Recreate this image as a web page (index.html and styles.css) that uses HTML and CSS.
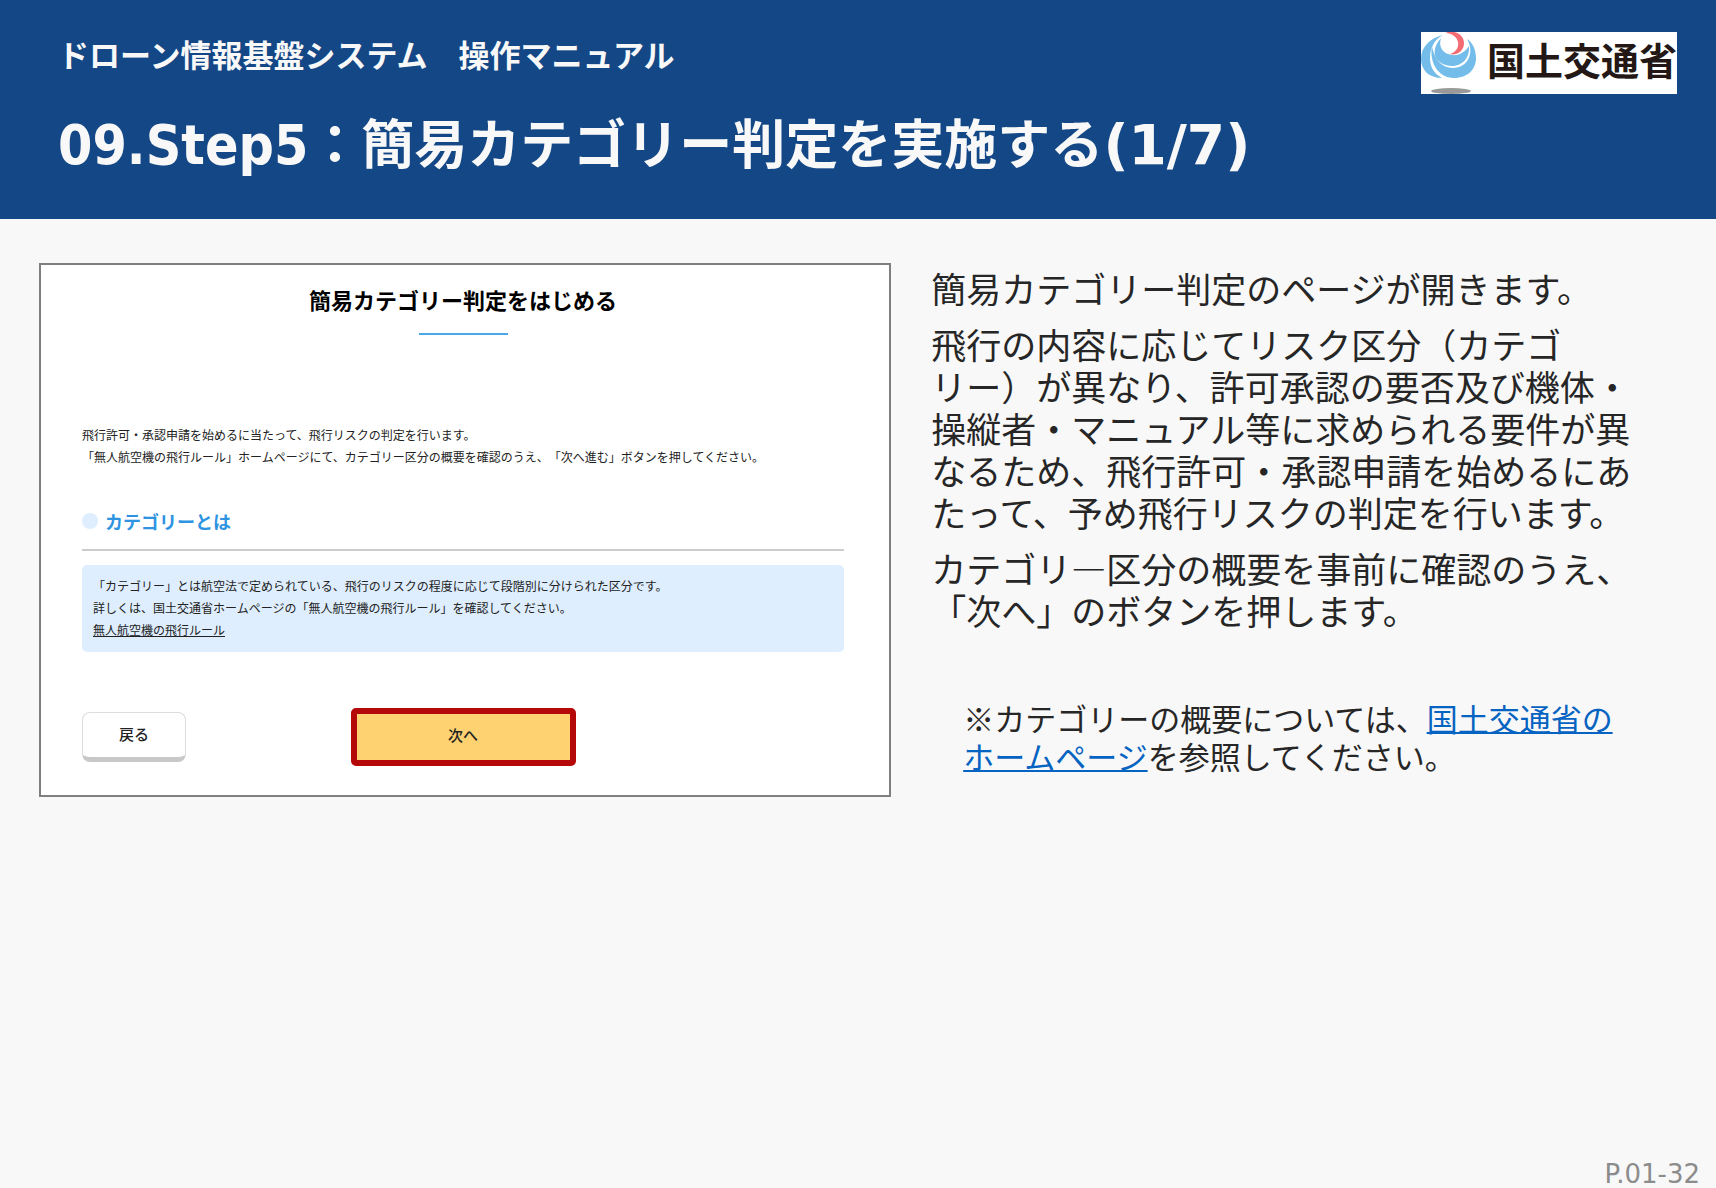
FILE: index.html
```html
<!DOCTYPE html>
<html lang="ja">
<head>
  <meta charset="UTF-8">
  <meta name="viewport" content="width=device-width, initial-scale=1.0">
  <title>ドローン情報基盤システム 操作マニュアル</title>
  <link rel="stylesheet" href="styles.css">
</head>
<body>
  <header class="header">
    <div class="header-text">
      <p class="manual-name">ドローン情報基盤システム　操作マニュアル</p>
      <h1><span class="step">09.Step5</span>：簡易カテゴリー判定を実施する<span class="count">(1/7)</span></h1>
    </div>
    <div class="logo">
      <svg viewBox="0 0 58 62" aria-hidden="true">
        <path d="M22 3C9 6 0 15 0 27c0 11 8 19 21 19C12 41 9 34 9 26 9 16 13 8 22 3z" fill="#74bdea"/>
        <path d="M11 14C8 30 17 46 33 46c14 0 22-9 22-20 0-9-4-16-9-19 8 13 1 29-14 29-11 0-19-9-21-22z" fill="#74bdea"/>
        <path d="M20 6c-6 7-8 14-5 20 3 5 10 8 16 8 11 0 18-9 17-20-4 6-10 10-17 9C22 22 17 15 20 6z" fill="#74bdea"/>
        <path d="M24 1c10-4 19 2 19 10 0 8-7 13-14 11 6-2 9-7 8-12C36 5 31 1 24 1z" fill="#f36c74"/>
        <ellipse cx="30" cy="59" rx="20" ry="3" fill="#999"/>
      </svg>
      <span>国土交通省</span>
    </div>
  </header>

  <main class="content">
    <section class="screen">
      <h2>簡易カテゴリー判定をはじめる</h2>
      <p class="lead">飛行許可・承認申請を始めるに当たって、飛行リスクの判定を行います。<br>
      「無人航空機の飛行ルール」ホームページにて、カテゴリー区分の概要を確認のうえ、「次へ進む」ボタンを押してください。</p>
      <h3>カテゴリーとは</h3>
      <div class="info-box">
        「カテゴリー」とは航空法で定められている、飛行のリスクの程度に応じて段階別に分けられた区分です。<br>
        詳しくは、国土交通省ホームページの「無人航空機の飛行ルール」を確認してください。<br>
        <a href="#">無人航空機の飛行ルール</a>
      </div>
      <div class="button-row">
        <button type="button" class="back-btn">戻る</button>
        <button type="button" class="next-btn">次へ</button>
      </div>
    </section>

    <section class="description">
      <p>簡易カテゴリー判定のページが開きます。</p>
      <p>飛行の内容に応じてリスク区分（カテゴリー）が異なり、許可承認の要否及び機体・操縦者・マニュアル等に求められる要件が異なるため、飛行許可・承認申請を始めるにあたって、予め飛行リスクの判定を行います。</p>
      <p>カテゴリ―区分の概要を事前に確認のうえ、「次へ」のボタンを押します。</p>
      <p class="note">※カテゴリーの概要については、<a href="#">国土交通省のホームページ</a>を参照してください。</p>
    </section>
  </main>

  <footer class="footer">P.01-32</footer>
</body>
</html>
```
FILE: styles.css
```css
* {
  box-sizing: border-box;
}

body {
  margin: 0;
  min-height: 100vh;
  display: flex;
  flex-direction: column;
  font-family: "Noto Sans CJK JP", sans-serif;
  background-color: #f8f8f8;
  color: #262626;
  line-break: strict;
  text-spacing-trim: space-all;
}

h1, h2, h3, p {
  margin: 0;
}

.header {
  background-color: #144786;
  color: #f8f8f8;
  display: flex;
  align-items: flex-start;
  justify-content: space-between;
  padding: 32px 39px 44px 58px;
}

.manual-name {
  font-size: 31px;
  font-weight: bold;
  line-height: 44px;
}

.header h1 {
  margin-top: 32px;
  font-size: 53px;
  font-weight: bold;
  line-height: 67px;
}

.step,
.count {
  font-family: "DejaVu Sans Condensed", "DejaVu Sans", sans-serif;
  font-size: 55px;
  line-height: 40px;
}

.count {
  font-family: "DejaVu Sans", sans-serif;
}

.logo {
  display: flex;
  align-items: flex-start;
  gap: 8px;
  background-color: white;
  color: #231815;
}

.logo svg {
  width: 58px;
  height: 62px;
}

.logo span {
  font-size: 38px;
  font-weight: bold;
  line-height: 54px;
}

.content {
  flex: 1;
  display: grid;
  grid-template-columns: 17fr 14fr;
  gap: 40px;
  align-items: start;
  padding: 44px 83px 0 39px;
}

.screen {
  background-color: white;
  border: 2px solid #7f7f7f;
  padding: 18px 45px 29px 41px;
  color: #222;
  font-size: 12px;
  line-height: 22px;
}

.screen h2 {
  color: #000;
  font-size: 22px;
  font-weight: bold;
  line-height: 32px;
  text-align: center;
}

.screen h2::after {
  content: "";
  display: block;
  width: 89px;
  height: 2px;
  margin: 18px auto 0;
  background-color: #4ba8e8;
}

.lead {
  margin-top: 89px;
}

.screen h3 {
  display: flex;
  align-items: center;
  gap: 7px;
  margin-top: 38px;
  padding-bottom: 13px;
  border-bottom: 2px solid #ccc;
  color: #2e94e2;
  font-size: 18px;
  font-weight: bold;
  line-height: 30px;
}

.screen h3::before {
  content: "";
  width: 16px;
  height: 16px;
  border-radius: 50%;
  background-color: #deeefe;
}

.info-box {
  margin-top: 14px;
  padding: 10px 11px 11px;
  border-radius: 5px;
  background-color: #deeefe;
}

.info-box a {
  color: inherit;
}

.button-row {
  display: grid;
  grid-template-columns: 1fr 225px 1fr;
  align-items: center;
  margin-top: 56px;
}

.button-row button {
  color: #222;
  font-family: inherit;
  font-size: 15px;
  font-weight: 500;
  cursor: pointer;
}

.back-btn {
  width: 104px;
  height: 50px;
  padding-bottom: 5px;
  background-color: white;
  border: 1px solid #ddd;
  border-bottom: 5px solid #c8c8c8;
  border-radius: 8px;
}

.next-btn {
  height: 58px;
  padding-bottom: 7px;
  background-color: #ffd271;
  border: 6px solid #b50909;
  border-radius: 5px;
}

.description {
  padding-top: 4px;
  font-size: 35px;
  line-height: 42px;
}

.description p + p {
  margin-top: 14px;
}

.description p.note {
  margin-top: 68px;
  margin-left: 32px;
  font-size: 31px;
  line-height: 38px;
}

.note a {
  color: #0563c1;
  text-decoration-thickness: 2px;
}

.footer {
  padding: 0 16px;
  color: #8c8c8c;
  font-family: "DejaVu Sans", sans-serif;
  font-size: 26px;
  line-height: 28px;
  text-align: right;
}
```
